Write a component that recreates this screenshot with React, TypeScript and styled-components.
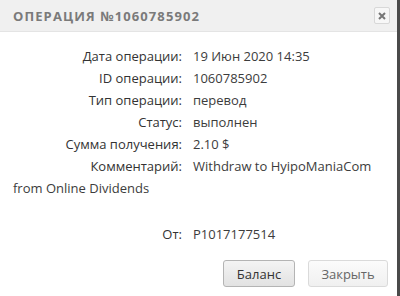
import React from 'react';
import styled, { createGlobalStyle } from 'styled-components';

const GlobalStyle = createGlobalStyle`
	html, body {
		margin: 0;
		padding: 0;
		background: #ffffff;
	}
`;

const Dialog = styled.div`
	width: 400px;
	height: 296px;
	box-sizing: border-box;
	border-right: 3px solid #4a4a4a;
	background: #ffffff;
	font-family: 'Open Sans', 'Liberation Sans', sans-serif;
	color: #3a3a3a;
	display: flex;
	flex-direction: column;
`;

const Header = styled.div`
	height: 32px;
	box-sizing: border-box;
	background: #f0f0f0;
	border-bottom: 1px solid #e4e4e4;
	display: flex;
	align-items: center;
	justify-content: space-between;
	padding: 0 7px 0 13px;
`;

const Title = styled.div`
	font-size: 13px;
	font-weight: 700;
	letter-spacing: 1.1px;
	color: #7a7a7a;
`;

const CloseButton = styled.div`
	width: 16px;
	height: 17px;
	box-sizing: border-box;
	border: 1px solid #d8d8d8;
	border-radius: 2px;
	background: #f7f7f7;
	display: flex;
	align-items: center;
	justify-content: center;
`;

const Body = styled.div`
	flex: 1;
	padding: 13px 10px 0 13px;
	font-size: 13px;
	line-height: 22px;
`;

const Row = styled.div<{ $gapBefore?: number }>`
	margin-top: ${(p) => p.$gapBefore ?? 0}px;
`;

const Label = styled.span`
	display: inline-block;
	width: 169px;
	text-align: right;
	margin-right: 11px;
	color: #333333;
`;

const Value = styled.span`
	color: #3c3c3c;
`;

const Footer = styled.div`
	display: flex;
	justify-content: flex-end;
	gap: 13px;
	padding: 0 9px 9px 0;
`;

const Button = styled.button<{ $primary?: boolean }>`
	height: 27px;
	width: ${(p) => (p.$primary ? 72 : 80)}px;
	padding: 0;
	font-family: 'Open Sans', 'Liberation Sans', sans-serif;
	font-size: 13px;
	border-radius: 3px;
	border: 1px solid ${(p) => (p.$primary ? '#b4b4b4' : '#dadada')};
	background: ${(p) => (p.$primary ? 'linear-gradient(#f4f4f4, #e2e2e2)' : 'linear-gradient(#fbfbfb, #f0f0f0)')};
	color: ${(p) => (p.$primary ? '#333333' : '#666666')};
`;

const rows: [string, string][] = [
	['Дата операции:', '19 Июн 2020 14:35'],
	['ID операции:', '1060785902'],
	['Тип операции:', 'перевод'],
	['Статус:', 'выполнен'],
	['Сумма получения:', '2.10 $'],
	['Комментарий:', 'Withdraw to HyipoManiaCom from Online Dividends'],
];

export default function App() {
	return (
		<>
			<GlobalStyle />
			<Dialog>
				<Header>
					<Title>ОПЕРАЦИЯ №1060785902</Title>
					<CloseButton>
						<svg width="8" height="8" viewBox="0 0 8 8">
							<path d="M1 1L7 7M7 1L1 7" stroke="#777" strokeWidth="2" />
						</svg>
					</CloseButton>
				</Header>
				<Body>
					{rows.map(([label, value]) => (
						<Row key={label}>
							<Label>{label}</Label>
							<Value>{value}</Value>
						</Row>
					))}
					<Row $gapBefore={24}>
						<Label>От:</Label>
						<Value>P1017177514</Value>
					</Row>
				</Body>
				<Footer>
					<Button $primary>Баланс</Button>
					<Button>Закрыть</Button>
				</Footer>
			</Dialog>
		</>
	);
}
